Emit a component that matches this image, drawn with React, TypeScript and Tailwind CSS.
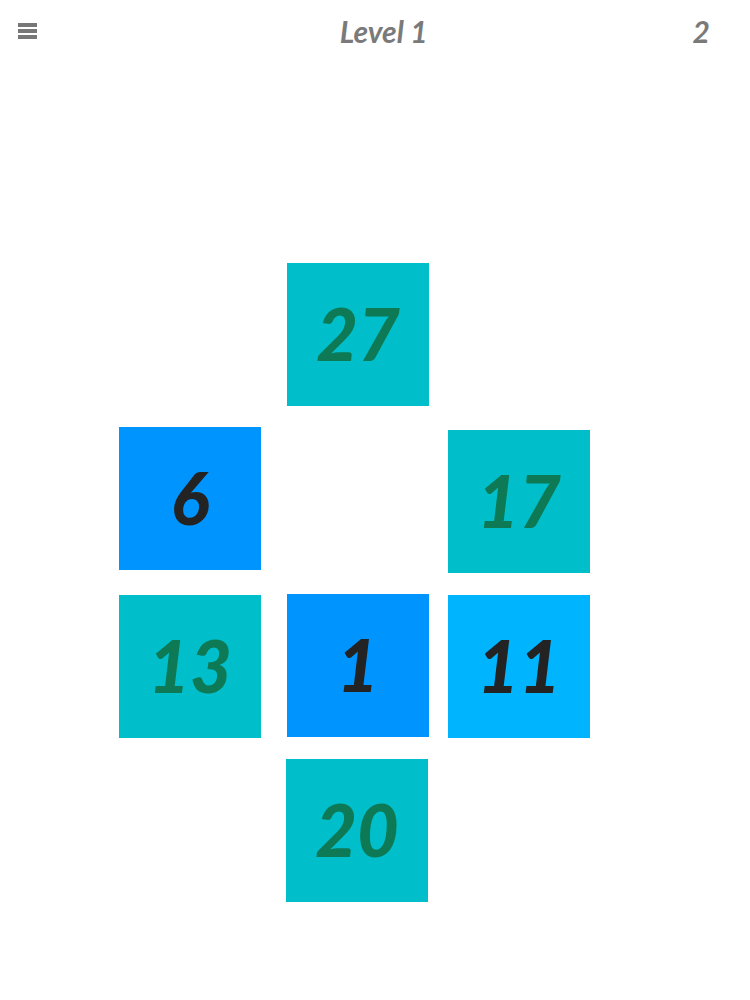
import React from "react";

type Tile = { n: number; x: number; y: number; bg: string; fg: string };

const tiles: Tile[] = [
  { n: 27, x: 287, y: 263, bg: "bg-[#00bfcb]", fg: "text-[#0d7a55]" },
  { n: 6, x: 119, y: 427, bg: "bg-[#0095fe]", fg: "text-[#232323]" },
  { n: 17, x: 448, y: 430, bg: "bg-[#00bfcb]", fg: "text-[#0d7a55]" },
  { n: 13, x: 119, y: 595, bg: "bg-[#00bfcb]", fg: "text-[#0d7a55]" },
  { n: 1, x: 287, y: 594, bg: "bg-[#0095fe]", fg: "text-[#232323]" },
  { n: 11, x: 448, y: 595, bg: "bg-[#00b4fe]", fg: "text-[#232323]" },
  { n: 20, x: 286, y: 759, bg: "bg-[#00bfcb]", fg: "text-[#0d7a55]" },
];

export default function App() {
  return (
    <div
      className="w-[750px] h-[1000px] bg-white relative overflow-hidden"
      style={{ fontFamily: "Lato, 'Open Sans', sans-serif" }}
    >
      <header className="flex items-center justify-between h-[62px] pl-[18px] pr-[40px]">
        <div className="flex flex-col gap-[2px] w-[19px]">
          <div className="h-[4px] bg-[#777]" />
          <div className="h-[4px] bg-[#777]" />
          <div className="h-[4px] bg-[#777]" />
        </div>
        <div className="text-[30px] font-bold italic text-[#7a7a7a] ml-[38px]">Level 1</div>
        <div className="text-[30px] font-bold italic text-[#7a7a7a]">2</div>
      </header>
      <div className="absolute inset-0">
        {tiles.map((t) => (
          <div
            key={t.n}
            className={`absolute w-[142px] h-[143px] flex items-center justify-center ${t.bg}`}
            style={{ left: t.x, top: t.y }}
          >
            <span className={`text-[72px] font-black italic leading-none pb-[4px] ${t.fg}`}>{t.n}</span>
          </div>
        ))}
      </div>
    </div>
  );
}
